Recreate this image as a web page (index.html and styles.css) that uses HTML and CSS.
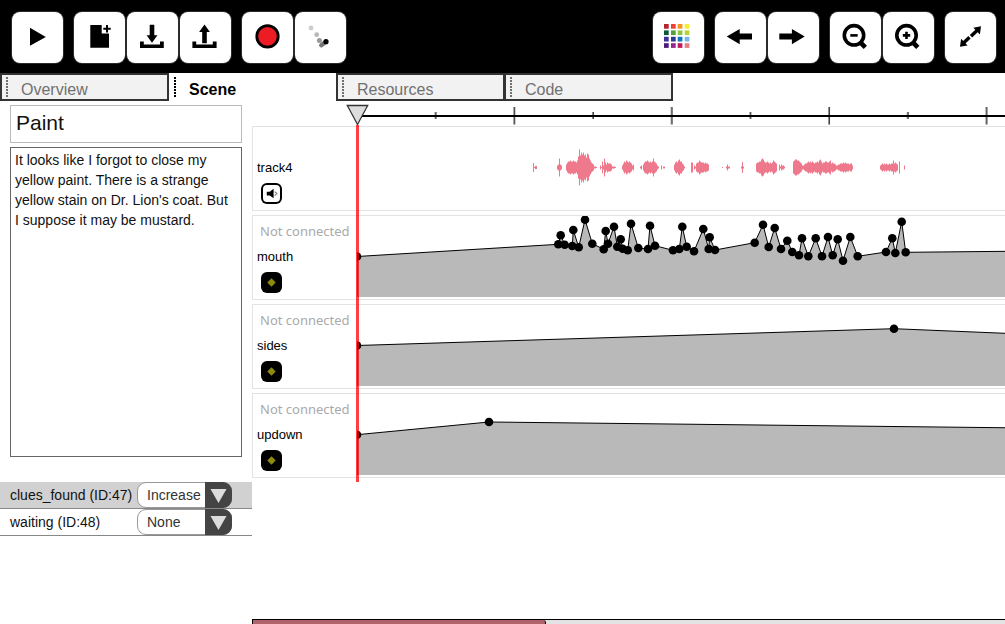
FILE: index.html
```html
<!DOCTYPE html>
<html lang="en">
<head>
<meta charset="utf-8">
<meta name="viewport" content="width=device-width, initial-scale=1">
<title>Scene editor</title>
<link rel="stylesheet" href="styles.css">
</head>
<body>
<header class="toolbar">
  <div class="group">
    <button class="tool" type="button" aria-label="Play"><svg viewBox="0 0 51 51"><path d="M18 15.7 33.8 25 18 33.8z"/></svg></button>
  </div>
  <div class="group">
    <button class="tool" type="button" aria-label="New"><svg viewBox="0 0 51 51"><path d="M16.3 13H27.7V21.4H35V35.8H16.3z"/><path d="M33 13v7.4M29.3 16.7h7.4" stroke="#000" stroke-width="2"/></svg></button>
    <button class="tool" type="button" aria-label="Load"><svg viewBox="0 0 51 51"><path d="M22.7 12.8h4.6V23.3h3.2L25 30.8 19.6 23.3h3.1zM13 29.4h3.8v3.2h16.2v-3.2h3.8v6.5H13z"/></svg></button>
    <button class="tool" type="button" aria-label="Save"><svg viewBox="0 0 51 51"><path d="M24.5 12.5 29.9 20h-3.1v11.2h-4.6V20h-3.1zM12.4 29.4h3.8v3.2h16.6v-3.2h3.8v6.5H12.4z"/></svg></button>
  </div>
  <div class="group">
    <button class="tool" type="button" aria-label="Record"><svg viewBox="0 0 51 51"><circle cx="25.5" cy="24.4" r="10.7" fill="#ed1c24" stroke="#000" stroke-width="2.8"/></svg></button>
    <button class="tool" type="button" aria-label="Motion"><svg viewBox="0 0 51 51"><circle cx="16" cy="16" r="2.4" fill="#ccc"/><circle cx="21.7" cy="22.7" r="2.4" fill="#b9b9b9"/><circle cx="24.4" cy="28.4" r="2.500" fill="#999"/><path d="M26.3 33.200 30.500 30" stroke="#777" stroke-width="4.500" stroke-linecap="round"/><circle cx="31" cy="29.700" r="2.600"/></svg></button>
  </div>
  <div class="group group-end">
    <button class="tool" type="button" aria-label="Colours"><svg viewBox="0 0 51 51">
      <path fill="#b5232c" d="M11 12h4.7v4.7H11z"/><path fill="#ef4136" d="M18 12h4.7v4.7H18z"/><path fill="#f7941e" d="M24.7 12h4.7v4.7h-4.7z"/><path fill="#f7ec31" d="M31.7 12h4.7v4.7h-4.7z"/>
      <path fill="#0b5a36" d="M11 18.4h4.7v4.7H11z"/><path fill="#56a03a" d="M18 18.4h4.7v4.7H18z"/><path fill="#8cc63f" d="M24.7 18.4h4.7v4.7h-4.7z"/><path fill="#b8d433" d="M31.7 18.4h4.7v4.7h-4.7z"/>
      <path fill="#3f2f9c" d="M11 24.8h4.7v4.7H11z"/><path fill="#2b3990" d="M18 24.8h4.7v4.7H18z"/><path fill="#0f75bc" d="M24.7 24.8h4.7v4.7h-4.7z"/><path fill="#77b7e8" d="M31.7 24.8h4.7v4.7h-4.7z"/>
      <path fill="#4d1a7c" d="M11 31.2h4.7v4.7H11z"/><path fill="#93278f" d="M18 31.2h4.7v4.7H18z"/><path fill="#c2185b" d="M24.7 31.2h4.7v4.7h-4.7z"/><path fill="#e37f86" d="M31.7 31.2h4.7v4.7h-4.7z"/>
    </svg></button>
  </div>
  <div class="group">
    <button class="tool" type="button" aria-label="Back"><svg viewBox="0 0 51 51"><path d="M11.7 24.6 24.7 17v4.6H37v6H24.7v4.7z"/></svg></button>
    <button class="tool" type="button" aria-label="Forward"><svg viewBox="0 0 51 51"><path d="M36.7 24.6 23.9 17v4.6H11.3v6h12.6v4.7z"/></svg></button>
  </div>
  <div class="group">
    <button class="tool" type="button" aria-label="Zoom out"><svg viewBox="0 0 51 51" fill="none" stroke="#000"><circle cx="24" cy="23.3" r="9.7" stroke-width="3.6"/><path d="M20.3 23.4h7.4" stroke-width="2.6"/><path d="M30 30l5.3 5.3" stroke-width="4.6"/></svg></button>
    <button class="tool" type="button" aria-label="Zoom in"><svg viewBox="0 0 51 51" fill="none" stroke="#000"><circle cx="23.5" cy="23.3" r="9.7" stroke-width="3.6"/><path d="M19.8 23.4h7.4M23.5 19.7v7.4" stroke-width="2.6"/><path d="M29.5 30l5.3 5.3" stroke-width="4.6"/></svg></button>
  </div>
  <div class="group">
    <button class="tool" type="button" aria-label="Full screen"><svg viewBox="0 0 51 51"><path d="M36 14.2 34.9 22.400 28.400 15.700zM15 34.700 16.100 26.800 22.600 33.500z"/><path d="M26 24.200 32.500 18M18.500 31 24.900 24.900" stroke="#000" stroke-width="3.400" stroke-dasharray="8.300 9"/></svg></button>
  </div>
</header>

<nav class="tabs">
  <button class="tab" type="button">Overview</button>
  <button class="tab tab-active" type="button">Scene</button>
  <button class="tab" type="button">Resources</button>
  <button class="tab" type="button">Code</button>
</nav>

<main class="workspace">
  <aside class="sidebar">
    <div class="notes">
      <input class="title" type="text" value="Paint" aria-label="Scene title">
      <textarea class="description" id="description" aria-label="Scene description" spellcheck="false">It looks like I forgot to close my yellow paint. There is a strange yellow stain on Dr. Lion's coat. But I suppose it may be mustard.</textarea>
    </div>
    <div class="variable variable-on">
      <label class="variable-name" for="clues">clues_found (ID:47)</label>
      <span class="picker">
        <select class="picker-select" id="clues"><option>Increase</option><option>None</option></select>
        <svg class="picker-arrow" viewBox="0 0 26 26"><path d="M5 7H21L13 21z"/></svg>
      </span>
    </div>
    <div class="variable">
      <label class="variable-name" for="waiting">waiting (ID:48)</label>
      <span class="picker">
        <select class="picker-select" id="waiting"><option>None</option><option>Increase</option></select>
        <svg class="picker-arrow" viewBox="0 0 26 26"><path d="M5 7H21L13 21z"/></svg>
      </span>
    </div>
  </aside>

  <section class="timeline" aria-label="Timeline">
    <svg class="ruler">
      <defs>
        <pattern id="ticks" x="65" y="0" width="157.4" height="25" patternUnits="userSpaceOnUse">
          <path d="M118.700 11v7M40 6v17.500" stroke="#000" stroke-width="1.200"/>
        </pattern>
      </defs>
      <rect x="107" y="0" width="100%" height="25" fill="url(#ticks)"/>
      <path d="M105 15H3000" stroke="#000" stroke-width="2"/>
    </svg>

    <div class="tracks">
      <article class="track">
        <div class="track-head">
          <span class="track-status"></span>
          <span class="track-name">track4</span>
          <button class="badge badge-sound" type="button" aria-label="Mute"><svg viewBox="0 0 20 20"><path d="M5.500 8.300H8.300L12 5.500v9L8.300 11.800H5.500z"/><path d="M13 8.200l2.200 1.900L13 12" fill="none" stroke="#777"/></svg></button>
        </div>
        <svg class="chart"><path id="wave" class="wave"/></svg>
      </article>

      <article class="track">
        <div class="track-head">
          <span class="track-status">Not connected</span>
          <span class="track-name">mouth</span>
          <button class="badge" type="button" aria-label="Add key to mouth"><svg viewBox="0 0 20 20"><path d="M10 6l4 4-4 4-4-4z" fill="#8e8a0c"/></svg></button>
        </div>
        <svg class="chart">
          <defs>
            <marker id="key" markerUnits="userSpaceOnUse" markerWidth="10" markerHeight="10" refX="5" refY="5"><circle cx="5" cy="5" r="4.300"/></marker>
          </defs>
          <g transform="translate(-357 -216)">
            <path class="curve" d="M357 297V256.500L558.300 244.300 560.700 235.300 564.700 244.700 572.300 246 573.300 230 578.700 247.300 585 219.700 592.300 243.700 603.700 249.300 605.700 231 608 243.700 614 226.700 617.300 246.700 620.700 239.300 622.700 248.700 627.700 250.300 631 223.700 638.300 248 648 249 650 225.700 655 245.700 673 250.300 679.300 249 682.300 226.700 686.700 246.700 694 251.300 703.300 229 708.700 249 709.700 237.300 715 250 754.700 242.700 763 224.700 768.700 247 774.700 228 781 249 787.300 240.700 792.300 252 799 255.300 802 238.300 808.300 256.300 815.700 238.300 822 256.300 828 237 832.700 255.300 837.700 239.300 843 260.700 850.300 237 857.700 256.300 886 252 892.300 238.300 895.300 253 901.700 221.700 905.700 252.300 3000 232V297"/>
          </g>
        </svg>
      </article>

      <article class="track">
        <div class="track-head">
          <span class="track-status">Not connected</span>
          <span class="track-name">sides</span>
          <button class="badge" type="button" aria-label="Add key to sides"><svg viewBox="0 0 20 20"><path d="M10 6l4 4-4 4-4-4z" fill="#8e8a0c"/></svg></button>
        </div>
        <svg class="chart">
          <g transform="translate(-357 -305)">
            <path class="curve" d="M357 386V345.500L894 328.700 1900 370.400V386"/>
          </g>
        </svg>
      </article>

      <article class="track">
        <div class="track-head">
          <span class="track-status">Not connected</span>
          <span class="track-name">updown</span>
          <button class="badge" type="button" aria-label="Add key to updown"><svg viewBox="0 0 20 20"><path d="M10 6l4 4-4 4-4-4z" fill="#8e8a0c"/></svg></button>
        </div>
        <svg class="chart">
          <g transform="translate(-357 -394)">
            <path class="curve" d="M357 475V434.700L489 422 3000 450V475"/>
          </g>
        </svg>
      </article>
    </div>

    <div class="playhead">
      <svg class="playhead-grip" viewBox="0 0 23 22"><path d="M1.300 1.500H21.700L11.500 20.500z" fill="#ddd" stroke="#333" stroke-width="1.300"/></svg>
    </div>
    <div class="scrollbar"><div class="scrollbar-thumb"></div></div>
  </section>
</main>
<script src="editor.js"></script>
</body>
</html>
```
FILE: styles.css
```css
* { box-sizing: border-box; }

body {
  margin: 0;
  min-height: 100vh;
  display: flex;
  flex-direction: column;
  overflow: hidden;
  background: #fff;
  color: #111;
  font: 13px/20px "Liberation Sans", Arial, sans-serif;
}

button, input, select, textarea { font: inherit; color: inherit; margin: 0; }
svg { display: block; }

/* Toolbar */
.toolbar {
  display: flex;
  gap: 11px;
  padding: 12px 9px 10px 12px;
  background: #000;
}
.group { display: flex; gap: 2px; }
.group-end { margin-left: auto; }
.tool {
  width: 51px;
  height: 51px;
  padding: 0;
  border: 0;
  border-radius: 8px;
  background: #fff;
  box-shadow: 0 0 0 1px #2b2b2b;
}

/* Tabs */
.tabs { display: flex; height: 28px; }
.tab {
  display: flex;
  align-items: center;
  gap: 13px;
  width: 169px;
  padding: 6px 0 0 4px;
  border: 2px solid #333;
  background: #f2f2f2;
  color: #707070;
  font-size: 16px;
  line-height: 20px;
}
.tab + .tab { margin-left: -1px; }
.tab::before {
  content: "";
  width: 2px;
  height: 20px;
  margin-top: -6px;
  background: repeating-linear-gradient(currentColor 0 2px, transparent 2px 3px);
}
.tab-active {
  border-color: transparent;
  background: none;
  color: #000;
  font-weight: bold;
}

.workspace { flex: 1; display: flex; }

/* Sidebar */
.sidebar { width: 252px; flex: none; }
.notes {
  display: flex;
  flex-direction: column;
  gap: 4px;
  padding: 4px 10px 25px;
}
.title {
  width: 100%;
  height: 38px;
  padding: 0 5px 2px;
  border: 1px solid #bbb;
  font-size: 21px;
}
.description {
  width: 100%;
  height: 310px;
  padding: 2px 10px 2px 4px;
  border: 1px solid #666;
  outline: 0;
  resize: none;
  font-size: 14px;
}
.variable {
  display: flex;
  align-items: center;
  height: 27px;
  padding-left: 10px;
  border-bottom: 1px solid #888;
  font-size: 14px;
}
.variable-on { background: #d1d1d1; }
.variable-name { width: 127px; white-space: nowrap; }
.picker { position: relative; width: 95px; height: 26px; }
.picker-select {
  appearance: none;
  width: 100%;
  height: 100%;
  padding: 0 28px 0 9px;
  border: 1px solid #999;
  border-radius: 9px;
  background: #fff;
  color: #333;
}
.picker-arrow {
  position: absolute;
  top: 0;
  right: 0;
  width: 27px;
  height: 26px;
  border-radius: 0 9px 9px 0;
  background: #444;
  fill: #ddd;
  pointer-events: none;
}

/* Timeline */
.timeline {
  position: relative;
  flex: 1;
  min-width: 0;
  display: flex;
  flex-direction: column;
}
.ruler { width: 100%; height: 25px; flex: none; }
.tracks { display: flex; flex-direction: column; gap: 4px; }
.track {
  display: flex;
  height: 85px;
  border: 1px solid #e3e3e3;
  border-right: 0;
}
.track-head {
  display: flex;
  flex-direction: column;
  flex: none;
  width: 104px;
  padding: 5px 0 0 4px;
}
.track-status {
  height: 20px;
  margin-bottom: 6px;
  padding-left: 3px;
  color: #aaa;
  font-family: "Noto Sans", sans-serif;
  white-space: nowrap;
}
.track-name { color: #000; margin-bottom: 5px; }
.badge {
  width: 21px;
  height: 21px;
  margin-left: 4px;
  padding: 0;
  border: 0;
  border-radius: 6px;
  background: #000;
}
.badge-sound { background: #fff; box-shadow: inset 0 0 0 2px #000; }
.chart { flex: 1; min-width: 0; height: 83px; }
.wave { stroke: #ee788c; fill: none; }
.curve {
  fill: #b9b9b9;
  stroke: #000;
  marker-mid: url(#key);
}

.playhead {
  position: absolute;
  top: 24px;
  left: 104px;
  width: 3px;
  height: 357px;
  background: rgba(255, 0, 0, 0.75);
}
.playhead-grip {
  position: absolute;
  top: -21px;
  left: -10px;
  width: 23px;
  height: 22px;
}

.scrollbar {
  height: 5px;
  margin-top: auto;
  border-top: 1px solid #000;
  background: #e3e3e3;
}
.scrollbar-thumb {
  width: 39%;
  height: 4px;
  border-right: 1px solid #000;
  border-left: 1px solid #000;
  border-top-right-radius: 3px;
  background: #b0636c;
}
```
FILE: editor.js
```js
// Half-heights of the sound wave, one per pixel, by start position.
const bursts = [
  [176, [4.5, 0.5, 1.5, 1.5]],
  [200, [2, 3, 9, 3, 2]],
  [209, [3, 5, 6, 6, 7, 6, 6, 7, 6, 6, 5, 7, 11, 18, 12, 15, 13, 15, 12, 13, 10, 14, 13, 9, 7, 5, 4, 3, 1, 1]],
  [239, [0.5]],
  [243, [2, 0.5, 6, 2, 9, 5, 3, 5, 4, 4, 4, 3, 1, 1, 1, 0.5]],
  [265, [2, 4, 6, 5, 7, 6, 5, 6, 5, 4, 2, 3]],
  [283, [1, 2, 0, 3, 5, 6, 6, 7, 6, 5, 6, 5, 6, 9, 6, 5, 4, 2, 1]],
  [304, [2, 0, 1, 1]],
  [317, [3, 5, 6, 5, 7, 8, 6, 6, 4, 3, 1]],
  [334, [5, 5, 0, 2, 1, 4, 5, 5, 7, 6, 5, 5, 5, 4, 5, 4, 4, 3]],
  [365, [0.5]],
  [369, [1, 3, 1, 1]],
  [384, [1, 5.5, 1]],
  [399, [4, 5, 5, 6, 6, 8, 9, 8, 6, 5, 5, 6, 5, 4, 5, 4, 5, 7, 6, 5, 4]],
  [422, [3, 1, 3, 2, 2, 1]],
  [436, [6, 7, 8, 8, 7, 7, 6, 5, 4, 2, 2, 3, 4, 4, 5, 6, 5, 6, 5, 6, 5, 4, 5, 5, 6, 5, 7, 8, 6, 4, 5, 5, 6, 6, 5, 5, 6, 7, 4, 5, 4, 4, 3, 2, 2, 3, 3, 4, 4, 4, 5, 4, 5, 4, 4, 4, 3, 4, 4, 2]],
  [523, [2, 3, 4, 3, 4, 3, 4, 3, 3, 4, 3, 4, 4, 7, 4, 5, 4, 3, 0, 6]],
  [547, [2]]
];
const middle = 40.5;
document.getElementById("wave").setAttribute("d", bursts.flatMap(([start, heights]) =>
  heights.map((h, i) => h ? `M${start + i + 0.5} ${middle - h}v${2 * h}` : "")).join(""));

// Start typing at the end of the description.
const description = document.getElementById("description");
description.focus();
description.setSelectionRange(description.value.length, description.value.length);
```
